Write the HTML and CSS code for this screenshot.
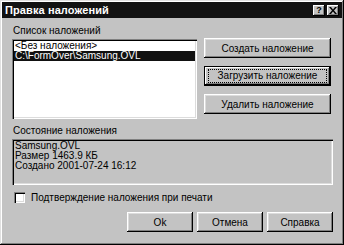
FILE: index.html
```html
<!DOCTYPE html>
<html lang="ru">
<head>
<meta charset="utf-8">
<link rel="stylesheet" href="styles.css">
</head>
<body>
<div class="window">
  <div class="titlebar">
    <span class="title">Правка наложений</span>
    <div class="tbtns">
      <span class="tbtn">?</span>
      <span class="tbtn x">
        <svg width="8" height="7" viewBox="0 0 8 7"><path d="M0 0h2l2 2.5L6 0h2L5 3.5 8 7H6L4 4.5 2 7H0l3-3.5z" fill="#000"/></svg>
      </span>
    </div>
  </div>
  <div class="content">
    <div class="top">
      <div class="left">
        <div class="label">Список наложений</div>
        <div class="listbox">
          <div class="item">&lt;Без наложения&gt;</div>
          <div class="item sel">C:\FormOver\Samsung.OVL</div>
        </div>
      </div>
      <div class="right">
        <div class="btn">Создать наложение</div>
        <div class="btn def"><span class="focus">Загрузить наложение</span></div>
        <div class="btn">Удалить наложение</div>
      </div>
    </div>
    <div class="label status-label">Состояние наложения</div>
    <div class="status">
      <div>Samsung.OVL</div>
      <div>Размер 1463.9 КБ</div>
      <div>Создано 2001-07-24 16:12</div>
    </div>
    <div class="check-row">
      <span class="checkbox"></span>
      <span>Подтверждение наложения при печати</span>
    </div>
    <div class="bottom">
      <div class="btn b">Ok</div>
      <div class="btn b">Отмена</div>
      <div class="btn b">Справка</div>
    </div>
  </div>
</div>
</body>
</html>
```

FILE: styles.css
```css
html, body {
  margin: 0;
  padding: 0;
  background: #c3c3c3;
}
body {
  font-family: "Liberation Sans", Arial, sans-serif;
  font-size: 10px;
  color: #000;
}
.window {
  width: 344px;
  height: 245px;
  box-sizing: border-box;
  background: #c3c3c3;
  padding: 2px;
  box-shadow: inset -1px -1px 0 #000, inset 1px 1px 0 #e0e0e0, inset -2px -2px 0 #808080, inset 2px 2px 0 #fff;
}
.titlebar {
  height: 16px;
  background: #121212;
  display: flex;
  align-items: center;
  justify-content: space-between;
  padding: 0 3px 0 3px;
}
.title {
  color: #fff;
  font-weight: bold;
  font-size: 11px;
  letter-spacing: 0.1px;
}
.tbtns {
  display: flex;
  gap: 2px;
}
.tbtn {
  width: 12px;
  height: 11px;
  box-sizing: border-box;
  background: #c3c3c3;
  box-shadow: inset -1px -1px 0 #000, inset 1px 1px 0 #fff, inset -2px -2px 0 #808080;
  display: flex;
  align-items: center;
  justify-content: center;
  font-weight: bold;
  font-size: 9px;
  line-height: 9px;
}
.content {
  padding: 7px 9px 0 10px;
}
.top {
  display: flex;
  gap: 7px;
}
.left {
  width: 185px;
}
.label {
  height: 12px;
  line-height: 12px;
  padding-left: 1px;
  margin-bottom: 2px;
}
.listbox {
  height: 80px;
  box-sizing: border-box;
  background: #fff;
  padding: 2px;
  box-shadow: inset 1px 1px 0 #808080, inset 2px 2px 0 #000, inset -1px -1px 0 #fff, inset -2px -2px 0 #dcdcdc;
}
.item {
  height: 10px;
  line-height: 10px;
  padding-left: 1px;
  white-space: nowrap;
}
.item.sel {
  background: #111;
  color: #fff;
}
.right {
  width: 127px;
  padding-top: 13px;
  display: flex;
  flex-direction: column;
  gap: 8px;
}
.btn {
  height: 20px;
  box-sizing: border-box;
  background: #c3c3c3;
  box-shadow: inset -1px -1px 0 #000, inset 1px 1px 0 #fff, inset -2px -2px 0 #808080, inset 2px 2px 0 #dcdcdc;
  display: flex;
  align-items: center;
  justify-content: center;
  white-space: nowrap;
}
.btn.def {
  box-shadow: inset 0 0 0 1px #000, inset -2px -2px 0 #000, inset 2px 2px 0 #fff, inset -3px -3px 0 #808080;
}
.focus {
  display: block;
  box-sizing: border-box;
  width: 119px;
  height: 14px;
  line-height: 12px;
  text-align: center;
  border: 1px dotted #000;
}
.status-label {
  margin-top: 6px;
}
.status {
  height: 46px;
  box-sizing: border-box;
  padding: 2px 3px;
  line-height: 10px;
  box-shadow: inset 1px 1px 0 #808080, inset 2px 2px 0 #000, inset -1px -1px 0 #fff, inset -2px -2px 0 #dcdcdc;
}
.check-row {
  margin-top: 6px;
  height: 13px;
  display: flex;
  align-items: center;
  gap: 6px;
  padding-left: 2px;
}
.checkbox {
  width: 11px;
  height: 11px;
  box-sizing: border-box;
  background: #fff;
  box-shadow: inset 1px 1px 0 #808080, inset 2px 2px 0 #000, inset -1px -1px 0 #fff, inset -2px -2px 0 #dcdcdc;
}
.bottom {
  margin-top: 8px;
  display: flex;
  justify-content: flex-end;
  gap: 4px;
}
.btn.b {
  width: 66px;
}
```
